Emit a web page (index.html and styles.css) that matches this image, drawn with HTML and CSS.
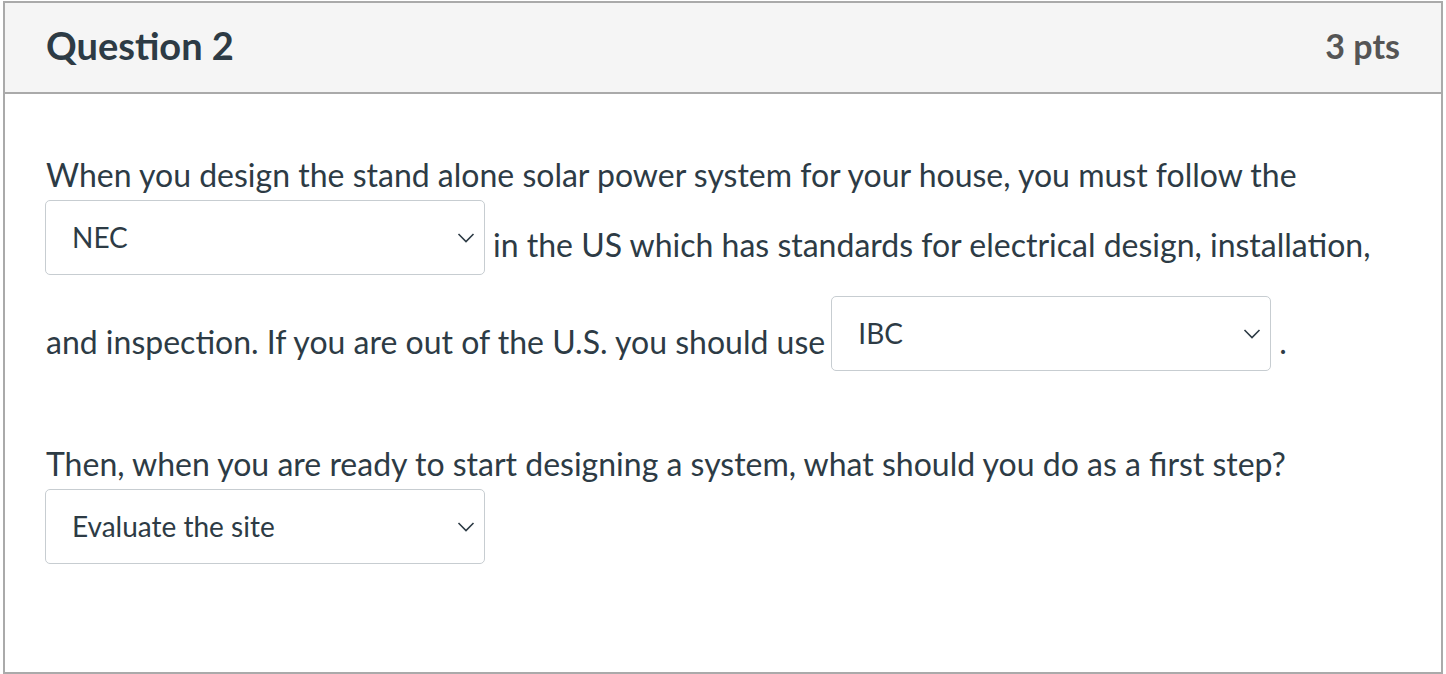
FILE: index.html
```html
<!DOCTYPE html>
<html lang="en">
<head>
  <meta charset="UTF-8">
  <meta name="viewport" content="width=device-width, initial-scale=1.0">
  <title>Question 2</title>
  <link rel="stylesheet" href="styles.css">
</head>
<body>
  <div class="question">
    <div class="question-header">
      <h2 class="question-title">Question 2</h2>
      <span class="points">3 pts</span>
    </div>

    <div class="question-body">
      <p class="question-text">
        When you design the stand alone solar power system for your house, you must follow the
        <span class="select select-first">
          <span class="select-value">NEC</span>
          <svg class="chevron" viewBox="0 0 18 10" width="18" height="10"><path d="M1.5 1 L9 8.5 L16.5 1" fill="none" stroke="currentColor" stroke-width="1.6"/></svg>
        </span>in the US which has standards for electrical design, installation, and inspection. If you are out of the U.S. you should use
        <span class="select select-second">
          <span class="select-value">IBC</span>
          <svg class="chevron" viewBox="0 0 18 10" width="18" height="10"><path d="M1.5 1 L9 8.5 L16.5 1" fill="none" stroke="currentColor" stroke-width="1.6"/></svg>
        </span>.
      </p>

      <p class="question-text">
        Then, when you are ready to start designing a system, what should you do as a first step?
        <span class="select select-first">
          <span class="select-value">Evaluate the site</span>
          <svg class="chevron" viewBox="0 0 18 10" width="18" height="10"><path d="M1.5 1 L9 8.5 L16.5 1" fill="none" stroke="currentColor" stroke-width="1.6"/></svg>
        </span>
      </p>
    </div>
  </div>
</body>
</html>
```

FILE: styles.css
```css
body {
  margin: 0;
  background-color: white;
  font-family: Lato, "Open Sans", sans-serif;
  color: #2d3b45;
}
.question {
  box-sizing: border-box;
  width: 1440px;
  height: 673px;
  margin: 1px 0 0 3px;
  border: 2px solid #aaaaaa;
}
.question-header {
  box-sizing: border-box;
  height: 91px;
  display: flex;
  justify-content: space-between;
  align-items: center;
  padding: 0 41px 5px 41px;
  background-color: #f5f5f5;
  border-bottom: 2px solid #aaaaaa;
}
.question-title {
  margin: 0;
  font-size: 38px;
  font-weight: bold;
  color: #2d3b45;
}
.points {
  font-size: 34px;
  font-weight: bold;
  color: #555555;
}
.question-body {
  padding: 58px 41px 0 41px;
}
.question-text {
  margin: 0 0 52px 0;
  font-size: 32px;
  line-height: 45px;
}
.select {
  box-sizing: border-box;
  display: inline-flex;
  align-items: center;
  justify-content: space-between;
  width: 440px;
  height: 75px;
  margin: 3px 8px 18px -1px;
  padding: 0 9px 0 26px;
  border: 1px solid #c7cdd1;
  border-radius: 5px;
  background-color: white;
  font-size: 28px;
  line-height: 1;
}
.select-first {
  vertical-align: 9px;
}
.select-second {
  vertical-align: 10px;
  margin-left: -2px;
}
.select-value {
  padding-bottom: 2px;
}
.chevron {
  color: #2d3b45;
}
```
